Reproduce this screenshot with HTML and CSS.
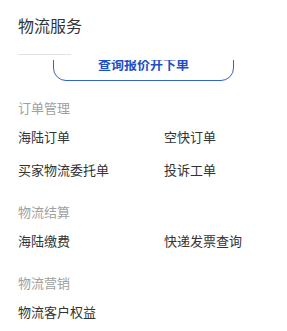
FILE: index.html
```html
<!DOCTYPE html>
<html lang="zh">
<head>
<meta charset="utf-8">
<link rel="stylesheet" href="styles.css">
</head>
<body>
<div class="panel">
  <div class="title">物流服务</div>
  <div class="divider"></div>
  <div class="btn-clip">
    <div class="btn">查询报价开下单</div>
  </div>
  <div class="section first">
    <div class="label">订单管理</div>
    <div class="grid">
      <div class="item">海陆订单</div>
      <div class="item">空快订单</div>
      <div class="item">买家物流委托单</div>
      <div class="item">投诉工单</div>
    </div>
  </div>
  <div class="section">
    <div class="label">物流结算</div>
    <div class="grid">
      <div class="item">海陆缴费</div>
      <div class="item">快递发票查询</div>
    </div>
  </div>
  <div class="section">
    <div class="label">物流营销</div>
    <div class="grid">
      <div class="item">物流客户权益</div>
    </div>
  </div>
</div>
</body>
</html>
```
FILE: styles.css
```css
html, body {
  margin: 0;
  padding: 0;
  background: #fff;
}
body {
  font-family: "Noto Sans CJK SC", "Noto Sans", sans-serif;
  color: #333;
}
.panel {
  padding: 13px 0 0 18px;
  width: 269px;
}
.title {
  font-size: 16px;
  line-height: 24px;
  color: #333;
}
.divider {
  margin-top: 17px;
  width: 53px;
  height: 1px;
  background: #e3e3e3;
}
.btn-clip {
  margin-top: 5px;
  height: 21px;
  overflow: hidden;
}
.btn {
  margin-top: -13px;
  margin-left: 35px;
  width: 181px;
  height: 34px;
  box-sizing: border-box;
  border: 1px solid #3562d1;
  border-radius: 13px;
  color: #1e4fc6;
  font-size: 13px;
  font-weight: bold;
  line-height: 31px;
  text-align: center;
}
.section {
  margin-top: 22px;
}
.section.first {
  margin-top: 17px;
}
.label {
  font-size: 13px;
  line-height: 20px;
  color: #a0a0a0;
}
.grid {
  margin-top: 9px;
  display: grid;
  grid-template-columns: 146px 1fr;
  row-gap: 13px;
}
.item {
  font-size: 13px;
  line-height: 20px;
  color: #333;
}
```
